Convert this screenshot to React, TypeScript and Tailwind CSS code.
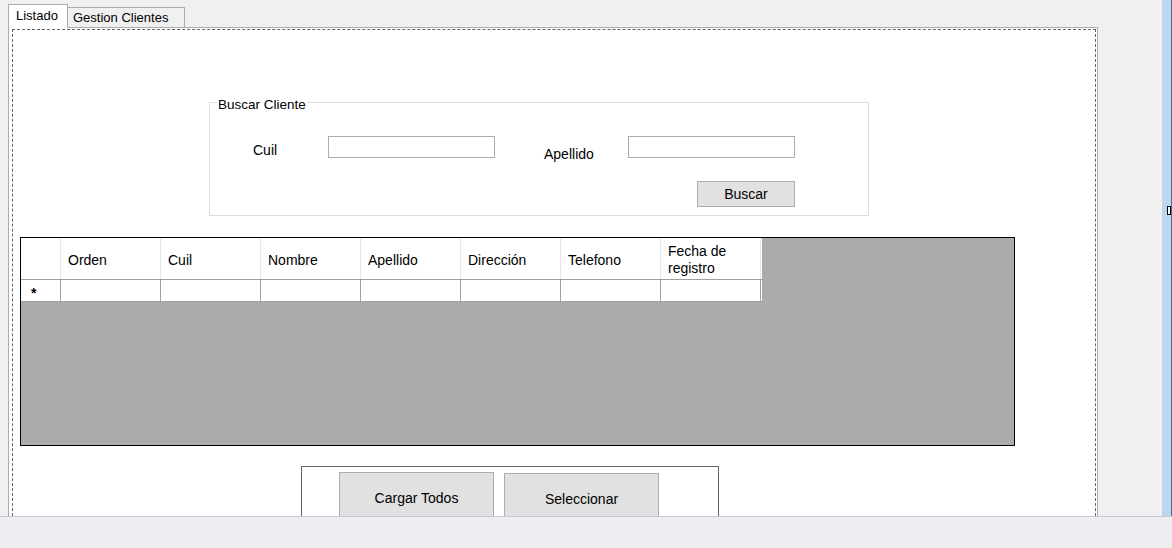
export default function App() {
  const columns = ["Orden", "Cuil", "Nombre", "Apellido", "Dirección", "Telefono"]

  return (
    <div
      className="w-[1172px] h-[548px] bg-[#f0f0f0] flex flex-col overflow-hidden text-black"
      style={{ fontFamily: '"Liberation Sans", Arial, sans-serif' }}
    >
      <div className="h-[516px] flex overflow-hidden">
        {/* tab control */}
        <div className="w-[1162px] pl-[8px] pt-[4px] flex flex-col">
          <div className="flex items-end h-[24px] text-[13px]">
            <div className="relative z-10 w-[60px] h-[24px] -mb-px bg-white border border-b-0 border-[#acacac] pl-[7px] pt-[3px] leading-[15px]">
              Listado
            </div>
            <div className="-ml-px w-[118px] h-[20px] bg-[#f0f0f0] border border-b-0 border-[#acacac] pl-[5px] pt-[2px] leading-[15px]">
              Gestion Clientes
            </div>
          </div>
          <div className="w-[1090px] h-[520px] bg-white border border-[#acacac] pt-[1px] pl-[3px] pr-[1px]">
            <div className="h-full border border-dashed border-[#646464] text-[14px] flex flex-col items-start">
              {/* Buscar Cliente group */}
              <div className="relative ml-[196px] mt-[72px] w-[660px] h-[115px] border border-[#dcdcdc]">
                <span className="absolute -top-[6px] left-[7px] bg-white px-[1px] leading-[16px] text-[13.5px]">
                  Buscar Cliente
                </span>
                <div className="flex items-start pt-[33px]">
                  <span className="ml-[43px] mt-[6px] w-[75px] leading-[16px]">Cuil</span>
                  <div className="w-[167px] h-[22px] border border-[#abadb3] bg-white" />
                  <span className="ml-[49px] mt-[10px] w-[84px] leading-[16px]">Apellido</span>
                  <div className="w-[167px] h-[22px] border border-[#abadb3] bg-white" />
                </div>
                <div className="flex pt-[19px]">
                  <button className="ml-[487px] w-[98px] h-[26px] bg-[#e1e1e1] border border-[#adadad] leading-[16px]">
                    Buscar
                  </button>
                </div>
              </div>

              {/* data grid */}
              <div className="ml-[7px] mt-[21px] w-[995px] h-[212px] bg-[#ababab] border border-black">
                <div className="flex w-[741px] h-[42px] bg-white border-b border-[#a0a0a0]">
                  <div className="w-[40px] border-r border-[#e3e7ec]" />
                  {columns.map((c) => (
                    <div key={c} className="w-[100px] border-r border-[#e3e7ec] pl-[7px] pt-[4px] flex items-center leading-[16px]">
                      {c}
                    </div>
                  ))}
                  <div className="w-[100px] border-r border-[#e3e7ec] pl-[7px] pt-[4px] flex items-center leading-[17px]">
                    Fecha de
                    <br />
                    registro
                  </div>
                </div>
                <div className="flex w-[741px] h-[22px] bg-white border-b border-[#a0a0a0]">
                  <div className="w-[40px] border-r border-[#a0a0a0] pl-[10px] pt-[5px] text-[14px] font-bold leading-[16px]">
                    *
                  </div>
                  {[0, 1, 2, 3, 4, 5, 6].map((i) => (
                    <div key={i} className="w-[100px] border-r border-[#a0a0a0]" />
                  ))}
                </div>
              </div>

              {/* bottom buttons group */}
              <div className="ml-[288px] mt-[20px] w-[418px] h-[80px] border border-[#646464] flex items-start">
                <button className="ml-[37px] mt-[5px] w-[155px] h-[52px] bg-[#e1e1e1] border border-[#adadad] leading-[16px]">
                  Cargar Todos
                </button>
                <button className="ml-[10px] mt-[6px] w-[155px] h-[52px] bg-[#e1e1e1] border border-[#adadad] leading-[16px]">
                  Seleccionar
                </button>
              </div>
            </div>
          </div>
        </div>
        <div className="w-[65px]" />
        {/* right edge strip */}
        <div className="relative w-[10px] bg-[#bcd6ee] border-r border-[#4a6a90]">
          <div className="absolute top-[206px] right-0 w-[4px] h-[9px] bg-white border border-black" />
        </div>
      </div>
      <div className="h-[32px] bg-[#eeedf2] border-t border-[#c9c9d1]" />
    </div>
  )
}
